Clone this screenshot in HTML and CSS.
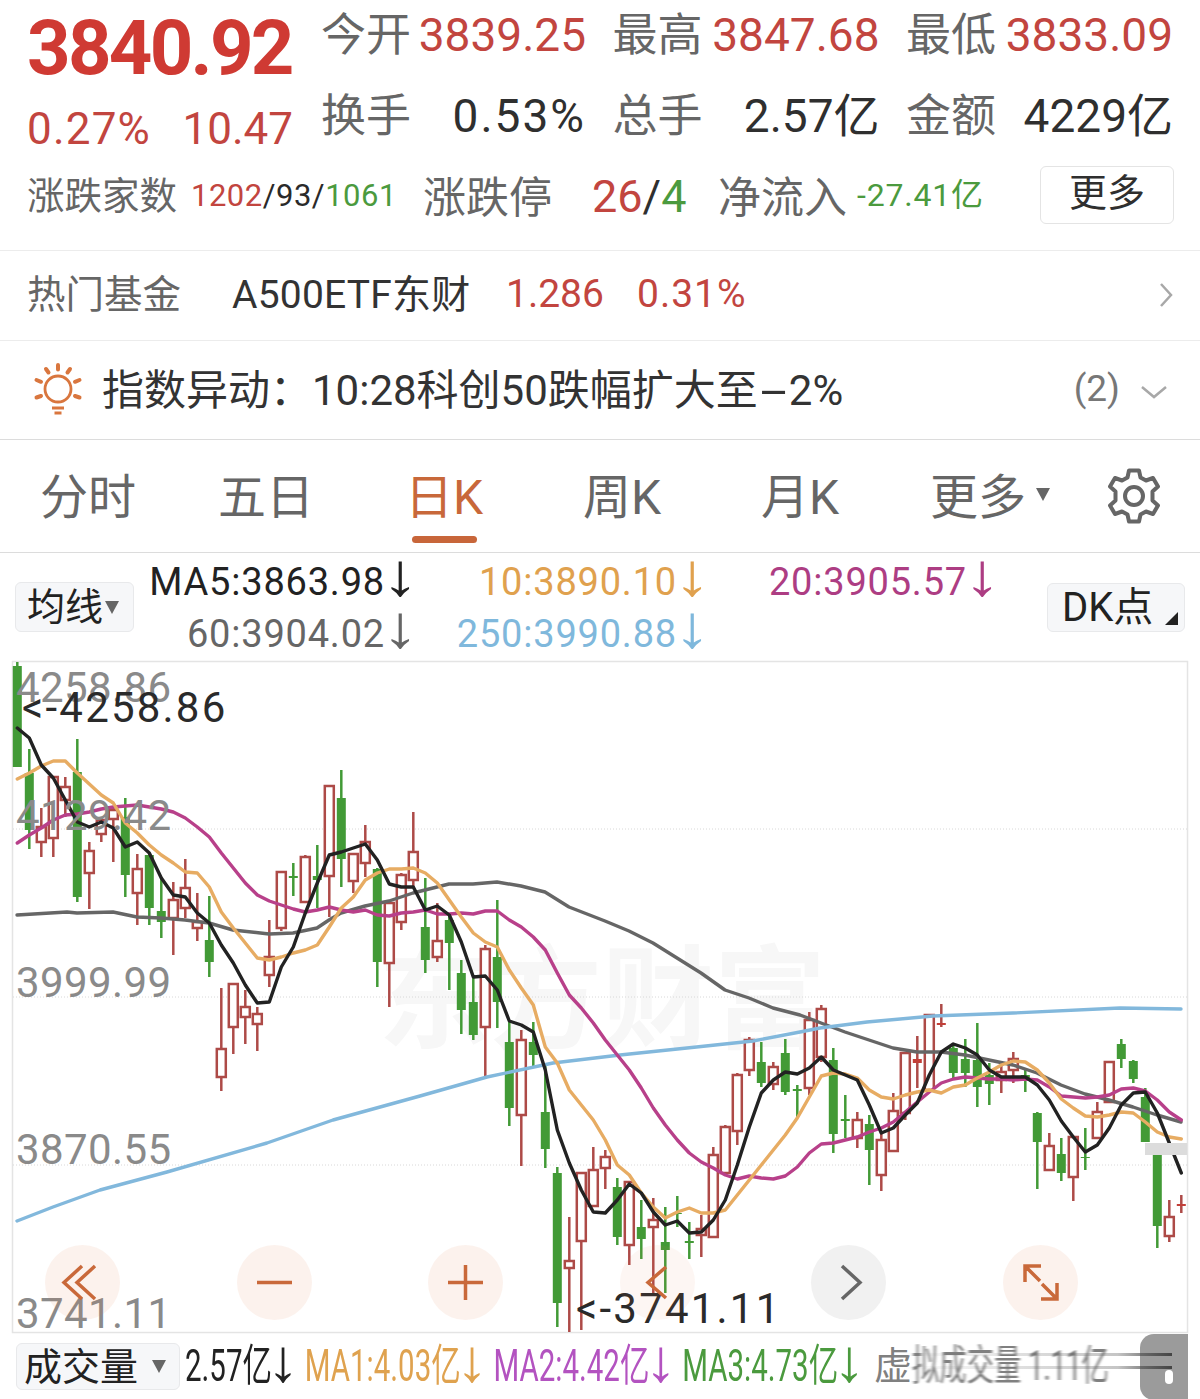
FILE: index.html
```html
<!DOCTYPE html>
<html lang="zh-CN">

<head>
    <meta charset="UTF-8">
    <title>上证指数 日K</title>
    <link rel="stylesheet" href="styles.css">
</head>

<body>
    <div class="page">
        <section class="quote">
            <div class="quote-top">
                <div class="price-box">
                    <div class="price up">3840.92</div>
                    <div class="change up"><span class="pct-small">0.27%</span><span>10.47</span></div>
                </div>
                <div class="stats">
                    <div class="stat"><span class="label">今开</span><span class="up">3839.25</span></div>
                    <div class="stat"><span class="label">最高</span><span class="up">3847.68</span></div>
                    <div class="stat"><span class="label">最低</span><span class="up">3833.09</span></div>
                    <div class="stat"><span class="label">换手</span><span class="dark pct">0.53%</span></div>
                    <div class="stat"><span class="label">总手</span><span class="dark">2.57亿</span></div>
                    <div class="stat"><span class="label">金额</span><span class="dark">4229亿</span></div>
                </div>
            </div>
            <div class="breadth">
                <span class="breadth-name">涨跌家数</span>
                <span class="breadth-count"><span class="up">1202</span>/93/<span class="down">1061</span></span>
                <span class="breadth-title">涨跌停</span>
                <span class="breadth-limit"><span class="up">26</span><span class="dark">/</span><span class="down">4</span></span>
                <span class="breadth-title">净流入</span>
                <span class="breadth-flow down">-27.41亿</span>
                <button class="more-btn">更多</button>
            </div>
        </section>

        <section class="fund">
            <span class="fund-label">热门基金</span>
            <span class="fund-name">A500ETF东财</span>
            <span class="fund-price up">1.286</span>
            <span class="fund-pct up">0.31%</span>
            <svg class="fund-arrow" viewBox="0 0 14 26"><path d="M2 2 L12 13 L2 24"/></svg>
        </section>

        <section class="notice">
            <svg class="bulb" viewBox="0 0 60 60">
                <circle cx="30" cy="28" r="13"/>
                <path d="M24 47 H36 M26.500 52 H33.500"/>
                <path class="ray" d="M30 4 V8.500 M18 8 L20.500 11.500 M42 8 L39.500 11.500 M8.500 19 L13 20.800 M51.500 19 L47 20.800 M8.500 36.500 L13 35 M51.500 36.500 L47 35"/>
            </svg>
            <span class="notice-text">指数异动：10:28科创50跌幅扩大至<span class="wide-hyphen">-</span>2%</span>
            <span class="notice-count">(2)</span>
            <svg class="notice-arrow" viewBox="0 0 28 14"><path d="M2 2 L14 12 L26 2"/></svg>
        </section>

        <nav class="tabs">
            <a class="tab">分时</a>
            <a class="tab">五日</a>
            <a class="tab active">日K</a>
            <a class="tab">周K</a>
            <a class="tab">月K</a>
            <a class="tab">更多<i class="tri"></i></a>
            <svg class="gear" viewBox="0 0 54 56">
                <path d="M22 2.500 H32 L33.500 9.500 L39 12.500 L46 10 L51 18.500 L45.500 23.500 V32.500 L51 37.500 L46 46 L39 43.500 L33.500 46.500 L32 53.500 H22 L20.500 46.500 L15 43.500 L8 46 L3 37.500 L8.500 32.500 V23.500 L3 18.500 L8 10 L15 12.500 L20.500 9.500 Z"/>
                <circle cx="27" cy="28" r="9"/>
            </svg>
        </nav>

        <section class="ma-bar">
            <button class="pick-btn">均线<i class="tri"></i></button>
            <div class="ma-grid">
                <span class="ma-dark">MA5:3863.98<span class="arrow">↓</span></span>
                <span class="ma-orange">10:3890.10<span class="arrow">↓</span></span>
                <span class="ma-purple">20:3905.57<span class="arrow">↓</span></span>
                <span class="ma-gray">60:3904.02<span class="arrow">↓</span></span>
                <span class="ma-blue">250:3990.88<span class="arrow">↓</span></span>
            </div>
            <button class="dk-btn">DK点<i class="corner"></i></button>
        </section>

        <section class="chart">
            <svg class="kline" viewBox="0 661 1200 672">
                <text class="watermark" x="378" y="1040">东方财富</text>
                <rect class="frame" x="12.500" y="661.500" width="1175" height="671"/>
                <path class="grid" d="M13 829 H1187 M13 997 H1187 M13 1165 H1187"/>
                <g id="candles"></g>
                <g id="lines"></g>
                <rect class="price-tag" x="1145" y="1143" width="42" height="12"/>
                <text class="axis" x="16" y="702">4258.86</text>
                <text class="axis" x="16" y="830">4129.42</text>
                <text class="axis" x="16" y="997">3999.99</text>
                <text class="axis" x="16" y="1164">3870.55</text>
                <text class="axis" x="16" y="1328">3741.11</text>
                <text class="extreme" x="22" y="722">&lt;-4258.86</text>
                <text class="extreme" x="576" y="1323">&lt;-3741.11</text>
            </svg>
            <div class="chart-btns">
                <button class="round"><svg viewBox="0 0 75 75"><path d="M37 21 L19 37.500 L37 54 M50 21 L32 37.500 L50 54"/></svg></button>
                <button class="round"><svg viewBox="0 0 75 75"><path d="M20 37.500 H55"/></svg></button>
                <button class="round"><svg viewBox="0 0 75 75"><path d="M20 37.500 H55 M37.500 20 V55"/></svg></button>
                <button class="round faded"><svg viewBox="0 0 75 75"><path d="M46 22 L28 37.500 L46 53"/></svg></button>
                <button class="round off"><svg viewBox="0 0 75 75"><path d="M31 21 L49 37.500 L31 54"/></svg></button>
                <button class="round"><svg viewBox="0 0 75 75"><path d="M22 37 V21 H38 M22 21 L37 36 M54 38 V54 H38 M54 54 L39 39"/></svg></button>
            </div>
        </section>

        <section class="vol-bar">
            <button class="vol-btn">成交量<i class="tri"></i></button>
            <div class="vol-values">
                <span class="vol-dark">2.57亿<span class="arrow">↓</span></span>
                <span class="vol-orange">MA1:4.03亿<span class="arrow">↓</span></span>
                <span class="vol-purple">MA2:4.42亿<span class="arrow">↓</span></span>
                <span class="vol-green">MA3:4.73亿<span class="arrow">↓</span></span>
            </div>
            <div class="vol-virtual">
                <span class="vol-first">虚</span>
                <span class="vol-smear">拟成交量 1.11亿</span>
            </div>
            <div class="scroll-handle"><i></i><i></i><i class="dot"></i></div>
            <svg class="smear-filter" width="0" height="0">
                <filter id="smear"><feGaussianBlur stdDeviation="2.2 0"/></filter>
            </svg>
        </section>
    </div>

    <script src="chart.js"></script>
</body>

</html>
```
FILE: styles.css
```css
* {
    box-sizing: border-box;
}

body {
    margin: 0;
    background: #fff;
    font-family: Roboto, "Noto Sans CJK SC", sans-serif;
    color: #2a2a2a;
}

button {
    font-family: inherit;
    padding: 0;
}

.page {
    width: 1200px;
    height: 1399px;
    overflow: hidden;
}

.up {
    color: #c2453f;
}

.down {
    color: #4b9a3e;
}

.dark {
    color: #2f2f2f;
}

/* quote header */
.quote {
    height: 251px;
    padding: 0 27px;
    border-bottom: 1px solid #ececec;
}

.quote-top {
    display: flex;
    gap: 28px;
    height: 163px;
}

.price-box {
    width: 266px;
}

.price {
    font-size: 76px;
    font-weight: 700;
    line-height: 92px;
    letter-spacing: -2.700px;
    margin-top: 2px;
    color: #cf3a33;
}

.change {
    display: flex;
    justify-content: space-between;
    font-size: 44px;
    line-height: 60px;
    margin-top: 5px;
}

.pct-small {
    letter-spacing: 1.200px;
}

.stats {
    flex: 1;
    display: grid;
    grid-template-columns: 265px 267px 267px;
    column-gap: 26.500px;
    row-gap: 11px;
    grid-auto-rows: 70px;
}

.stat {
    display: flex;
    justify-content: space-between;
    align-items: baseline;
    font-size: 46px;
    line-height: 70px;
}

.pct {
    letter-spacing: 2px;
}

.label {
    font-size: 45px;
    color: #666;
}

.breadth {
    position: relative;
    display: flex;
    align-items: center;
    height: 60px;
    line-height: 60px;
}

.breadth-name {
    width: 164px;
    padding-top: 6px;
    font-size: 37.500px;
    color: #666;
}

.breadth-count {
    width: 232px;
    padding-top: 6px;
    font-size: 31px;
    letter-spacing: 0.500px;
}

.breadth-title {
    padding-top: 10px;
    font-size: 43px;
    color: #666;
}

.breadth-limit {
    width: 126px;
    margin-left: 40px;
    padding-top: 8px;
    font-size: 45px;
}

.breadth-flow {
    margin-left: 10px;
    padding-top: 4px;
    font-size: 32px;
    letter-spacing: 0.800px;
}

.more-btn {
    position: absolute;
    top: 3px;
    right: -1px;
    display: flex;
    align-items: center;
    justify-content: center;
    width: 134px;
    height: 58px;
    padding-bottom: 4px;
    background: #fff;
    border: 1px solid #e4e4e4;
    border-radius: 6px;
    font-size: 38px;
    line-height: 1;
    color: #2f2f2f;
}

/* fund row */
.fund {
    display: flex;
    align-items: center;
    height: 90px;
    padding: 0 0 5px 27px;
    border-bottom: 1px solid #ececec;
    font-size: 39px;
}

.fund-label {
    width: 205px;
    margin-top: -4px;
    font-size: 38.500px;
    color: #666;
}

.fund-name {
    width: 274px;
    margin-top: -4px;
    letter-spacing: 0.200px;
    color: #333;
}

.fund-price {
    width: 131px;
    margin-top: 2px;
}

.fund-pct {
    margin-top: 2px;
    letter-spacing: 1px;
}

.fund-arrow {
    width: 14px;
    height: 26px;
    margin-left: auto;
    margin-right: 27px;
    margin-top: 4px;
}

.fund-arrow path,
.notice-arrow path {
    fill: none;
    stroke: #a8a8a8;
    stroke-width: 2.500;
}

/* notice row */
.notice {
    display: flex;
    align-items: center;
    height: 99px;
    padding: 0 0 8px 28px;
    border-bottom: 1px solid #dcdcdc;
}

.bulb {
    width: 60px;
    height: 60px;
    margin: 9px 14px 0 0;
}

.bulb circle,
.bulb path {
    fill: none;
    stroke: #d9763e;
    stroke-width: 2.800;
}

.bulb .ray {
    stroke-linecap: round;
    stroke-width: 4;
}

.notice-text {
    font-size: 42px;
    color: #333;
}

.wide-hyphen {
    display: inline-block;
    width: 31px;
    text-align: center;
    transform: scaleX(2.3);
}

.notice-count {
    margin: 4px 0 0 auto;
    font-size: 37px;
    color: #777;
}

.notice-arrow {
    width: 28px;
    height: 14px;
    margin: 12px 32px 0 20px;
}

/* period tabs */
.tabs {
    display: flex;
    align-items: center;
    height: 113px;
    padding-top: 4px;
    margin-left: -1px;
    border-bottom: 1px solid #dcdcdc;
    font-size: 48px;
    line-height: 56px;
    color: #666;
}

.tab {
    position: relative;
    width: 178px;
    text-align: center;
}

.tab.active {
    color: #c8683a;
}

.tab.active::after {
    content: "";
    position: absolute;
    left: 57px;
    bottom: -17px;
    width: 65px;
    height: 7px;
    border-radius: 4px;
    background: #c8663a;
}

.tri {
    display: inline-block;
    width: 0;
    height: 0;
    border-left: 7.500px solid transparent;
    border-right: 7.500px solid transparent;
    border-top: 13px solid #666;
}

.tab .tri {
    position: absolute;
    left: 147px;
    top: 18px;
}

.gear {
    width: 54px;
    height: 56px;
    margin: -4px 0 0 40px;
}

.gear path,
.gear circle {
    fill: none;
    stroke: #666;
    stroke-width: 4;
    stroke-linejoin: round;
}

/* moving averages */
.ma-bar {
    position: relative;
    height: 108px;
}

.pick-btn,
.dk-btn,
.vol-btn {
    position: absolute;
    display: flex;
    align-items: center;
    background: #f6f7f9;
    border: 1px solid #e8e9eb;
    border-radius: 6px;
    line-height: 1;
    color: #222;
}

.pick-btn {
    left: 15px;
    top: 29px;
    width: 119px;
    height: 50px;
    font-size: 38px;
    padding-left: 11px;
}

.pick-btn .tri {
    margin-left: 2px;
}

.dk-btn {
    left: 1047px;
    top: 30px;
    width: 138px;
    height: 49px;
    font-size: 40px;
    padding-left: 14px;
}

.corner {
    position: absolute;
    right: 6px;
    bottom: 6px;
    width: 13px;
    height: 13px;
    background: #222;
    clip-path: polygon(100% 0, 100% 100%, 0 100%);
}

.ma-grid {
    display: grid;
    grid-template-columns: 264px 292px 290px;
    justify-items: end;
    grid-auto-rows: 52px;
    margin-left: 151px;
    padding-top: 3px;
    font-size: 38px;
    letter-spacing: 0.800px;
    line-height: 52px;
    white-space: nowrap;
}

.arrow {
    display: inline-block;
    font-family: "Liberation Sans", sans-serif;
    font-size: 60px;
    letter-spacing: 0;
    line-height: 0;
    transform: scaleX(1.25);
}

.ma-dark {
    color: #222;
}

.ma-orange {
    color: #e0a14e;
}

.ma-purple {
    color: #ad3d83;
}

.ma-gray {
    color: #666;
}

.ma-blue {
    color: #7fb8dc;
}

/* k-line chart */
.chart {
    position: relative;
    height: 672px;
}

.kline {
    display: block;
    width: 1200px;
    height: 672px;
    overflow: visible;
}

.frame {
    fill: none;
    stroke: #e4e4e4;
    stroke-width: 1.500;
}

.watermark {
    font-size: 112px;
    font-weight: 700;
    fill: #f7f7f7;
}

.grid {
    fill: none;
    stroke: #d8d8d8;
    stroke-width: 1;
    stroke-dasharray: 1 2;
}

.price-tag {
    fill: #dcdcdc;
}

.axis {
    font-size: 42px;
    letter-spacing: 0.400px;
    fill: #8a8a8a;
}

.extreme {
    font-size: 42px;
    letter-spacing: 2.200px;
    fill: #2a2a2a;
}

.wick-up,
.wick-down {
    stroke-width: 2.500;
}

.wick-up {
    stroke: #ad4a47;
}

.wick-down {
    stroke: #429a36;
}

.body-up {
    fill: #fff;
    stroke: #ad4a47;
    stroke-width: 2.500;
}

.body-doji {
    fill: #c33f38;
}

.body-down {
    fill: #429a36;
}

.line {
    fill: none;
    stroke-width: 3.400;
    stroke-linejoin: round;
    stroke-linecap: round;
}

.line-ma5 {
    stroke: #222;
}

.line-ma10 {
    stroke: #e7ac63;
}

.line-ma20 {
    stroke: #b8408a;
}

.line-ma60 {
    stroke: #666;
}

.line-ma250 {
    stroke: #82b8dc;
}

.chart-btns {
    position: absolute;
    left: 45px;
    bottom: 13px;
    display: flex;
    gap: 116.500px;
}

.round {
    width: 75px;
    height: 75px;
    border: 0;
    border-radius: 50%;
    background: rgba(225, 130, 80, 0.1);
}

.round svg {
    display: block;
    width: 75px;
    height: 75px;
}

.round path {
    fill: none;
    stroke: #c9693a;
    stroke-width: 3.500;
}

.round.faded {
    background: rgba(225, 130, 80, 0.07);
}

.round.off {
    background: #f1f1f1;
}

.round.off path {
    stroke: #666;
}

/* volume bar */
.vol-bar {
    position: relative;
    height: 66px;
}

.vol-btn {
    left: 16px;
    top: 10px;
    width: 164px;
    height: 47px;
    font-size: 38px;
    padding-left: 7px;
}

.vol-btn .tri {
    margin-left: 14px;
}

.vol-values {
    position: absolute;
    left: 185px;
    top: 0;
    display: flex;
    gap: 16px;
    width: 1000px;
    font-size: 44px;
    line-height: 66px;
    white-space: nowrap;
    transform: scaleX(0.67);
    transform-origin: left;
}

.vol-values .arrow {
    margin: 0 1.500px;
    transform: scaleX(1.6);
}

.vol-dark {
    color: #222;
}

.vol-orange {
    color: #dfa24f;
}

.vol-purple {
    color: #b353c0;
}

.vol-green {
    color: #4b9a3e;
}

.vol-virtual {
    position: absolute;
    left: 874px;
    top: 0;
    display: flex;
    font-size: 38px;
    line-height: 66px;
    color: #808080;
    white-space: nowrap;
}

.vol-smear {
    filter: url(#smear);
    transform: scale(0.72, 1.1);
    transform-origin: left;
}

.scroll-handle {
    position: absolute;
    left: 1140px;
    top: 1px;
    width: 48px;
    height: 66px;
    border-radius: 14px 0 0 14px;
    background: #9b9b9b;
}

.scroll-handle i {
    position: absolute;
    left: -240px;
    top: 19px;
    width: 272px;
    height: 3px;
    background: linear-gradient(to right, rgba(90, 90, 90, 0), rgba(90, 90, 90, 0.35) 80%, #444);
}

.scroll-handle i + i {
    top: 32px;
}

.scroll-handle .dot {
    left: 25px;
    top: 36px;
    width: 8px;
    height: 14px;
    border-radius: 4px;
    background: #fff;
}

.smear-filter {
    position: absolute;
}
```
FILE: chart.js
```js
// high, body top, body bottom, low, u = up / d = down
const candles = [
    [662, 666, 767, 767, "d"], [749, 773, 830, 849, "d"], [808, 827, 842, 857, "u"], [777, 777, 838, 857, "u"],
    [777, 787, 800, 817, "u"], [739, 772, 897, 902, "d"], [842, 851, 873, 909, "u"], [817, 820, 834, 842, "u"],
    [807, 810, 819, 862, "u"], [798, 817, 875, 897, "d"], [854, 869, 893, 925, "u"], [853, 855, 908, 925, "d"],
    [877, 911, 922, 938, "d"], [882, 900, 918, 955, "u"], [859, 888, 908, 918, "u"], [893, 922, 928, 941, "u"],
    [896, 940, 962, 977, "d"], [988, 1049, 1077, 1091, "u"], [984, 984, 1027, 1054, "u"], [990, 1007, 1017, 1044, "u"],
    [1007, 1014, 1024, 1051, "u"], [920, 957, 975, 987, "u"], [872, 872, 928, 931, "u"], [863, 876, 878, 896, "d"],
    [855, 857, 902, 903, "u"], [845, 876, 880, 908, "d"], [785, 786, 876, 917, "u"], [770, 798, 859, 887, "d"],
    [853, 854, 881, 893, "u"], [825, 842, 863, 877, "u"], [868, 869, 962, 987, "d"], [903, 903, 963, 1007, "u"],
    [873, 875, 922, 930, "u"], [812, 852, 880, 887, "u"], [878, 927, 960, 973, "d"], [903, 941, 957, 962, "u"],
    [913, 920, 943, 990, "d"], [960, 973, 1010, 1034, "d"], [977, 1002, 1035, 1040, "d"], [945, 949, 1027, 1077, "u"],
    [900, 957, 1002, 1028, "d"], [1022, 1042, 1108, 1126, "d"], [1030, 1040, 1115, 1166, "u"], [1022, 1042, 1055, 1067, "d"],
    [1065, 1112, 1149, 1168, "d"], [1167, 1173, 1303, 1327, "d"], [1217, 1261, 1268, 1332, "u"], [1173, 1173, 1241, 1330, "u"],
    [1147, 1170, 1206, 1206, "u"], [1150, 1157, 1168, 1189, "u"], [1178, 1187, 1237, 1245, "d"], [1181, 1182, 1245, 1265, "u"],
    [1200, 1227, 1239, 1259, "d"], [1198, 1220, 1227, 1293, "u"], [1207, 1242, 1250, 1293, "d"], [1196, 1213, 1214, 1227, "d"],
    [1222, 1241, 1243, 1259, "d"], [1215, 1229, 1235, 1257, "u"], [1147, 1155, 1237, 1237, "u"], [1125, 1127, 1173, 1173, "u"],
    [1073, 1075, 1131, 1145, "u"], [1037, 1040, 1070, 1076, "u"], [1042, 1062, 1083, 1087, "d"], [1062, 1067, 1084, 1090, "u"],
    [1039, 1053, 1092, 1095, "d"], [1085, 1089, 1091, 1118, "d"], [1012, 1020, 1088, 1095, "u"], [1005, 1009, 1057, 1062, "u"],
    [1048, 1060, 1134, 1153, "d"], [1095, 1119, 1121, 1138, "d"], [1112, 1120, 1138, 1148, "u"], [1115, 1124, 1150, 1185, "d"],
    [1133, 1140, 1175, 1191, "u"], [1093, 1111, 1151, 1151, "u"], [1052, 1053, 1113, 1120, "u"], [1036, 1059, 1063, 1088, "u"],
    [1014, 1015, 1090, 1090, "u"], [1004, 1023, 1025, 1027, "u"], [1043, 1048, 1073, 1078, "d"], [1039, 1059, 1073, 1087, "d"],
    [1023, 1060, 1087, 1107, "d"], [1063, 1075, 1084, 1105, "d"], [1065, 1072, 1080, 1093, "u"], [1052, 1059, 1070, 1083, "u"],
    [1068, 1075, 1078, 1092, "d"], [1112, 1113, 1142, 1189, "d"], [1133, 1146, 1170, 1170, "u"], [1138, 1154, 1173, 1181, "d"],
    [1137, 1137, 1177, 1201, "u"], [1128, 1157, 1158, 1170, "d"], [1102, 1112, 1138, 1138, "u"], [1062, 1062, 1102, 1102, "u"],
    [1039, 1044, 1059, 1068, "d"], [1060, 1061, 1079, 1083, "d"], [1088, 1097, 1142, 1142, "d"], [1143, 1155, 1226, 1248, "d"],
    [1200, 1217, 1236, 1242, "u"], [1195, 1204, 1206, 1213, "u"]
];

// one y per candle
const ma5 = [728, 738, 765, 778, 800, 822, 827, 822, 828, 847, 842, 853, 878, 895, 897, 913, 923, 945, 963, 985,
    1003, 1002, 967, 947, 913, 883, 855, 852, 848, 844, 860, 884, 887, 887, 910, 906, 915, 942, 977, 976,
    990, 1021, 1025, 1032, 1070, 1130, 1163, 1190, 1212, 1213, 1200, 1184, 1193, 1212, 1225, 1221, 1233, 1232, 1220, 1200,
    1165, 1127, 1093, 1080, 1072, 1074, 1068, 1057, 1070, 1075, 1080, 1105, 1133, 1128, 1115, 1103, 1075, 1052, 1044, 1048,
    1055, 1070, 1077, 1077, 1077, 1085, 1100, 1121, 1137, 1152, 1145, 1128, 1105, 1093, 1092, 1113, 1143, 1173];

const ma10 = [779, 773, 766, 761, 761, 773, 784, 795, 803, 823, 833, 845, 855, 863, 872, 873, 887, 912, 928, 943,
    958, 960, 957, 953, 950, 945, 927, 908, 897, 880, 873, 869, 869, 868, 873, 883, 900, 917, 933, 942,
    947, 970, 988, 1005, 1047, 1063, 1090, 1105, 1120, 1140, 1165, 1175, 1193, 1207, 1218, 1212, 1208, 1213, 1213, 1210,
    1195, 1180, 1165, 1150, 1135, 1118, 1097, 1076, 1073, 1074, 1078, 1090, 1097, 1099, 1095, 1092, 1090, 1093, 1087, 1085,
    1078, 1072, 1065, 1061, 1062, 1070, 1083, 1099, 1108, 1116, 1117, 1115, 1112, 1113, 1122, 1132, 1137, 1139];

const ma20 = [843, 835, 828, 820, 815, 814, 812, 809, 807, 806, 805, 807, 809, 812, 818, 827, 837, 853, 868, 883,
    895, 901, 905, 909, 912, 910, 907, 910, 912, 910, 915, 916, 913, 912, 910, 914, 914, 913, 914, 911,
    911, 920, 927, 937, 950, 973, 995, 1008, 1023, 1040, 1055, 1070, 1088, 1108, 1125, 1140, 1153, 1162, 1168, 1175,
    1179, 1176, 1178, 1179, 1176, 1167, 1153, 1144, 1143, 1140, 1137, 1132, 1128, 1122, 1112, 1102, 1092, 1083, 1079, 1077,
    1078, 1079, 1079, 1080, 1079, 1080, 1087, 1096, 1097, 1098, 1097, 1095, 1089, 1088, 1091, 1100, 1112, 1120];

// free points, x y
const ma60 = [[17, 915], [67, 912], [77, 913], [113, 912], [137, 917], [161, 918], [185, 920], [209, 923], [233, 930],
    [269, 934], [293, 933], [317, 928], [329, 920], [341, 913], [365, 906], [389, 901], [413, 893], [449, 884], [473, 884],
    [497, 882], [521, 886], [545, 892], [569, 907], [605, 921], [629, 931], [653, 943], [677, 958], [701, 973], [725, 990],
    [749, 998], [773, 1008], [800, 1015], [821, 1023], [845, 1032], [869, 1040], [893, 1048], [917, 1052], [941, 1052],
    [965, 1055], [989, 1060], [1013, 1065], [1037, 1073], [1061, 1085], [1085, 1094], [1109, 1100], [1133, 1107],
    [1157, 1115], [1181, 1122]];

const ma250 = [[17, 1221], [53, 1207], [100, 1190], [167, 1172], [267, 1143], [333, 1120], [420, 1096], [487, 1077],
    [553, 1063], [620, 1055], [687, 1048], [753, 1041], [800, 1032], [820, 1028], [867, 1022], [933, 1016], [1013, 1013], [1120, 1008], [1181, 1009]];

const SVG_NS = "http://www.w3.org/2000/svg";

function addShape(parent, tag, attrs) {
    const el = document.createElementNS(SVG_NS, tag);
    for (const key in attrs) el.setAttribute(key, attrs[key]);
    parent.appendChild(el);
}

function drawCandles() {
    const group = document.getElementById("candles");
    candles.forEach((c, i) => {
        const x = 17.3 + i * 12;
        const [high, top, bottom, low, dir] = c;
        const up = dir === "u";
        const doji = bottom - top < 5;
        addShape(group, "line", { x1: x, x2: x, y1: high, y2: low, class: up ? "wick-up" : "wick-down" });
        let cls = up ? "body-up" : "body-down";
        if (up && doji) cls = "body-doji";
        addShape(group, "rect", { x: x - 4.5, y: top, width: 9, height: bottom - top, class: cls });
    });
}

function drawLine(points, name) {
    const d = points.map(p => p.join(",")).join(" ");
    addShape(document.getElementById("lines"), "polyline", { points: d, class: "line line-" + name });
}

function byIndex(ys) {
    return ys.map((y, i) => [17.3 + i * 12, y]);
}

drawCandles();
drawLine(ma60, "ma60");
drawLine(ma250, "ma250");
drawLine(byIndex(ma20), "ma20");
drawLine(byIndex(ma10), "ma10");
drawLine(byIndex(ma5), "ma5");
```
